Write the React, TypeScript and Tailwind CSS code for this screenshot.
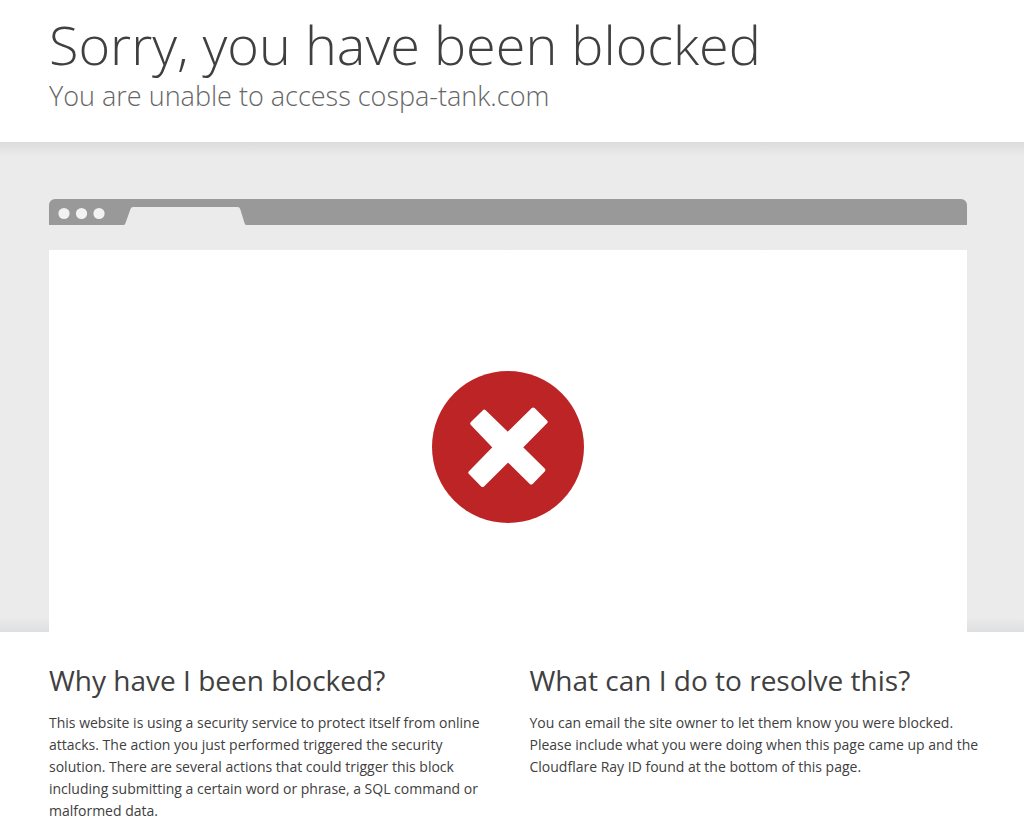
import React from "react";

const reasons =
  "This website is using a security service to protect itself from online attacks. The action you just performed triggered the security solution. There are several actions that could trigger this block including submitting a certain word or phrase, a SQL command or malformed data.";
const resolution =
  "You can email the site owner to let them know you were blocked. Please include what you were doing when this page came up and the Cloudflare Ray ID found at the bottom of this page.";

function BrowserBar() {
  return (
    <div className="h-[26px] overflow-hidden rounded-t-md bg-[#999999]" aria-hidden="true">
      <svg className="h-[26px] w-[200px]" viewBox="0 0 200 26">
        <circle cx="15" cy="14.5" r="5.6" fill="#f2f2f2" />
        <circle cx="32.5" cy="14.5" r="5.6" fill="#f2f2f2" />
        <circle cx="50" cy="14.5" r="5.6" fill="#f2f2f2" />
        <path d="M75 26Q76 25.500 76.500 24L81.500 10Q82.200 8 84 8H188.500Q190.500 8 191.200 10L195.500 24Q196 25.500 197 26Z" fill="#ebebeb" />
      </svg>
    </div>
  );
}

function BlockedIcon() {
  return (
    <svg className="size-[152px]" viewBox="0 0 152 152" role="img" aria-label="Blocked">
      <circle cx="76" cy="76" r="76" fill="#bd2426" />
      <path
        d="M52.300 40.700L75.700 63.500L101.200 38.500L113.600 50.900L88.500 76.300L111.300 99L99.200 111.500L76 88.800L50.600 114L38.400 101.700L63 76.300L40.300 52.500Z"
        fill="#fff"
        stroke="#fff"
        strokeWidth="4"
        strokeLinejoin="round"
      />
    </svg>
  );
}

function Section({ title, text }: { title: string; text: string }) {
  return (
    <section>
      <h2 className="text-[28px] leading-9 font-normal text-[#404040]">{title}</h2>
      <p className="mt-3.5 text-[14px] leading-[22px] text-[#404040]">{text}</p>
    </section>
  );
}

export default function App() {
  return (
    <main className="bg-white font-['Open_Sans','Noto_Sans',sans-serif] text-[#404040]">
      <header className="pt-3 pr-14 pb-[26px] pl-[49px]">
        <h1 className="text-[54px] leading-[64px] font-light">Sorry, you have been blocked</h1>
        <p className="text-[27px] leading-10 font-light text-[#666666]">
          You are unable to access cospa-tank.com
        </p>
      </header>
      <div className="bg-linear-to-b from-[#dcdcdc] from-0% via-[#ebebeb] via-3% to-[#ebebeb]">
        <div className="bg-linear-to-t from-[#dedfe1] to-transparent to-3% pt-[57px] pr-[57px] pl-[49px]">
          <BrowserBar />
          <div className="mt-[25px] flex h-[382px] items-center justify-center bg-white pt-3">
            <BlockedIcon />
          </div>
        </div>
      </div>
      <div className="grid grid-cols-2 gap-7 pt-[30px] pr-[42px] pl-[49px]">
        <Section title="Why have I been blocked?" text={reasons} />
        <Section title="What can I do to resolve this?" text={resolution} />
      </div>
    </main>
  );
}
